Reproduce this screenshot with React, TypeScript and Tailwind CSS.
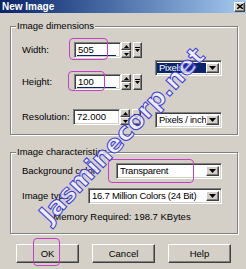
import React from 'react';

const sunken =
  'border border-t-[#808080] border-l-[#808080] border-r-white border-b-white shadow-[inset_1px_1px_0_#404040,inset_-1px_-1px_0_#d4d0c8] bg-white';
const raised =
  'border border-t-white border-l-white border-r-[#404040] border-b-[#404040] shadow-[inset_-1px_-1px_0_#808080] bg-[#d4d0c8]';

function ArrowDown() {
  return (
    <svg width="7" height="4" viewBox="0 0 7 4">
      <polygon points="0,0 7,0 3.5,4" fill="#000" />
    </svg>
  );
}

function DropButton() {
  return (
    <div className={`${raised} w-[13px] h-full flex items-center justify-center shrink-0`}>
      <ArrowDown />
    </div>
  );
}

function Spinner() {
  return (
    <div className="flex items-stretch h-full gap-[2px]">
      <div className="w-[10px] flex flex-col">
        <div className={`${raised} flex-1 flex items-center justify-center`}>
          <svg width="5" height="3" viewBox="0 0 5 3">
            <polygon points="2.5,0 5,3 0,3" fill="#000" />
          </svg>
        </div>
        <div className={`${raised} flex-1 flex items-center justify-center`}>
          <svg width="5" height="3" viewBox="0 0 5 3">
            <polygon points="0,0 5,0 2.5,3" fill="#000" />
          </svg>
        </div>
      </div>
      <div className={`${raised} w-[9px] flex items-center justify-center`}>
        <svg width="5" height="6" viewBox="0 0 5 6">
          <rect x="0" y="0" width="5" height="1" fill="#000" />
          <polygon points="0,2 5,2 2.5,5" fill="#000" />
        </svg>
      </div>
    </div>
  );
}

function NumberField({ value, underline }: { value: string; underline?: boolean }) {
  return (
    <div className="flex items-stretch h-[16px]">
      <div className={`${sunken} w-[47px] h-full relative flex items-center pl-[3px]`}>
        <span>{value}</span>
        {underline && <div className="absolute left-[2px] right-[4px] bottom-[1px] h-[1px] bg-[#0a246a]" />}
      </div>
      <Spinner />
    </div>
  );
}

function Select({ value, width, selected }: { value: string; width: string; selected?: boolean }) {
  return (
    <div className={`${sunken} ${width} h-[16px] flex items-stretch p-[2px] pl-[1px]`}>
      <div
        className={`flex-1 min-w-0 overflow-hidden whitespace-nowrap flex items-center pl-[2px] tracking-[-0.25px] ${selected ? 'bg-[#0a246a] text-white' : ''}`}
      >
        {value}
      </div>
      <DropButton />
    </div>
  );
}

function Group({ title, className, children }: { title: string; className: string; children: React.ReactNode }) {
  return (
    <div
      className={`relative ml-[10px] w-[228px] border border-[#808080] shadow-[inset_1px_1px_0_#fff,1px_1px_0_#fff] ${className}`}
    >
      <span className="absolute -top-[7px] left-[5px] px-[1px] bg-[#d4d0c8] leading-[12px]">{title}</span>
      {children}
    </div>
  );
}

function Button({ label }: { label: string }) {
  return (
    <div className={`${raised} w-[63px] h-[19px] flex items-center justify-center`}>{label}</div>
  );
}

export default function App() {
  return (
    <div className="w-[246px] h-[269px] bg-[#d4d0c8] relative overflow-hidden flex flex-col font-['Liberation_Sans',Arial,sans-serif] text-[9.5px] text-black leading-none">
      {/* title bar */}
      <div className="h-[13px] bg-gradient-to-r from-[#0a246a] to-[#a6caf0] flex items-center justify-between pl-[2px] pr-[1px] shrink-0">
        <span className="text-white font-bold text-[10px]">New Image</span>
        <div className={`${raised} w-[11px] h-[10px] flex items-center justify-center`}>
          <svg width="6" height="5" viewBox="0 0 6 5">
            <path d="M0 0 L6 5 M6 0 L0 5" stroke="#000" strokeWidth="1.4" />
          </svg>
        </div>
      </div>

      <Group title="Image dimensions" className="mt-[13px] h-[109px] pt-[15px] pl-[11px] pr-[15px]">
        <div className="flex">
          <div className="flex flex-col gap-[16px]">
            <div className="flex items-center">
              <span className="w-[52px]">Width:</span>
              <NumberField value="505" underline />
            </div>
            <div className="flex items-center">
              <span className="w-[52px]">Height:</span>
              <NumberField value="100" underline />
            </div>
          </div>
          <div className="ml-auto mt-[18px]">
            <Select value="Pixels" width="w-[67px]" selected />
          </div>
        </div>
        <div className="flex items-start mt-[19px]">
          <span className="w-[51px] h-[16px] flex items-center">Resolution:</span>
          <NumberField value="72.000" />
          <div className="ml-auto mt-[3px]">
            <Select value="Pixels / inch" width="w-[67px]" />
          </div>
        </div>
      </Group>

      <Group title="Image characteristics" className="mt-[17px] h-[82px] pt-[10px] pl-[11px] pr-[15px]">
        <div className="flex items-center">
          <span>Background color:</span>
          <div className="ml-auto">
            <Select value="Transparent" width="w-[106px]" />
          </div>
        </div>
        <div className="flex items-center mt-[9px]">
          <span>Image type:</span>
          <div className="ml-auto">
            <Select value="16.7 Million Colors (24 Bit)" width="w-[134px]" />
          </div>
        </div>
        <div className="text-center mt-[8px]">Memory Required: 198.7 KBytes</div>
      </Group>

      <div className="flex pl-[16px] gap-[13px] mt-[10px]">
        <Button label="OK" />
        <Button label="Cancel" />
        <Button label="Help" />
      </div>

      {/* annotation marks */}
      <div className="absolute left-[69px] top-[38px] w-[39px] h-[22px] border-[1.5px] border-[#c83cc8] rounded-[4px]" />
      <div className="absolute left-[68px] top-[71px] w-[37px] h-[20px] border-[1.5px] border-[#c83cc8] rounded-[4px]" />
      <div className="absolute left-[108px] top-[159px] w-[86px] h-[24px] border-[1.5px] border-[#c83cc8] rounded-[4px]" />
      <div className="absolute left-[33px] top-[238px] w-[27px] h-[28px] border-[1.5px] border-[#c83cc8] rounded-[4px]" />

      {/* watermark */}
      <div className="absolute left-[122px] top-[135px] -translate-x-1/2 -translate-y-1/2 rotate-[-47deg] whitespace-nowrap font-['DejaVu_Sans',sans-serif] font-bold text-[25px] leading-none text-[#f4f4ff]/80 [-webkit-text-stroke:1px_#3a3ad8]">
        Jasminecorp.net
      </div>
    </div>
  );
}
